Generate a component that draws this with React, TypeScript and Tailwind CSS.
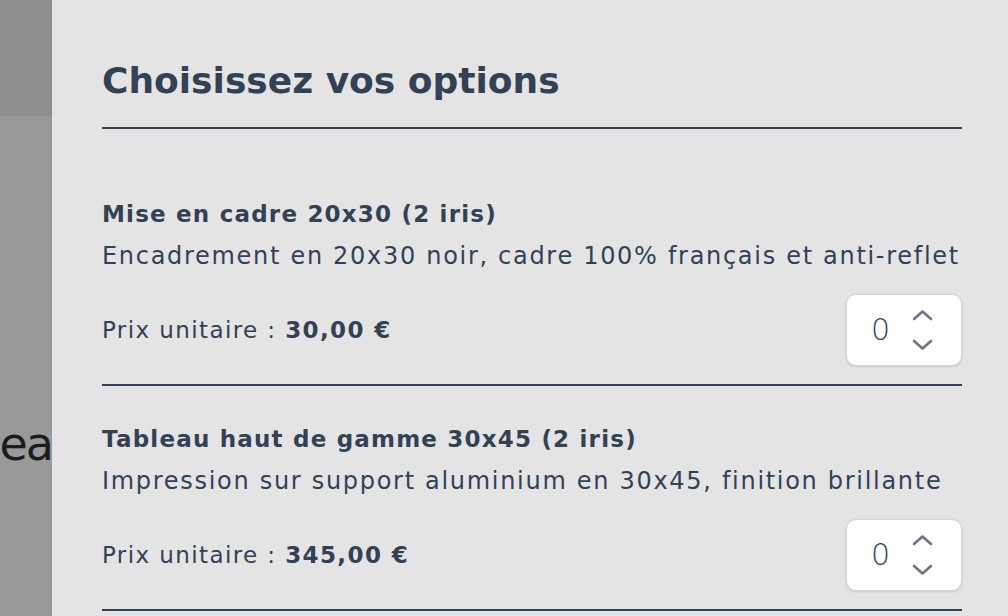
import React from "react";

type Option = {
  title: string;
  description: string;
  price: string;
};

const options: Option[] = [
  {
    title: "Mise en cadre 20x30 (2 iris)",
    description: "Encadrement en 20x30 noir, cadre 100% français et anti-reflet",
    price: "30,00 €",
  },
  {
    title: "Tableau haut de gamme 30x45 (2 iris)",
    description: "Impression sur support aluminium en 30x45, finition brillante",
    price: "345,00 €",
  },
];

function Stepper() {
  return (
    <div className="flex h-[72px] w-[116px] items-center rounded-[10px] border border-[#cfd6e0] bg-white pl-[24px] shadow-sm">
      <span className="w-[41px] text-[30px] font-light leading-none text-[#334155]">0</span>
      <div className="flex flex-col items-center gap-[18px] text-[#6b7585]">
        <svg width="21" height="12" viewBox="0 0 21 12" fill="none">
          <path d="M2 10 L10.5 2.5 L19 10" stroke="currentColor" strokeWidth="2.6" strokeLinecap="round" strokeLinejoin="round" />
        </svg>
        <svg width="21" height="12" viewBox="0 0 21 12" fill="none">
          <path d="M2 2 L10.5 9.5 L19 2" stroke="currentColor" strokeWidth="2.6" strokeLinecap="round" strokeLinejoin="round" />
        </svg>
      </div>
    </div>
  );
}

export default function App() {
  return (
    <div
      className="flex h-[616px] w-full overflow-hidden text-[#334155]"
      style={{ fontFamily: "'DejaVu Sans', 'Noto Sans', sans-serif" }}
    >
      {/* dimmed page behind the drawer */}
      <aside className="flex w-[52px] shrink-0 flex-col">
        <div className="h-[116px] bg-[#8e8e8e] shadow-[0_2px_3px_rgba(0,0,0,0.08)]"></div>
        <div className="flex flex-1 justify-end overflow-hidden bg-[#999999] pt-[305px]">
          <span className="whitespace-nowrap text-[46px] leading-none tracking-[-2px] text-[#1c1c1c]">ea</span>
        </div>
      </aside>

      {/* drawer */}
      <main className="flex-1 bg-[#e4e4e4] pl-[50px] pr-[46px] pt-[57px]">
        <h2 className="border-b-2 border-[#334155] pb-[22px] text-[36px] font-bold leading-[48px]">
          Choisissez vos options
        </h2>

        <div className="pt-[38px]">
          {options.map((opt, i) => (
            <div key={i} className={`border-b-2 border-[#334155] pb-[18px] ${i === 0 ? "pt-[32px]" : "pt-[38px]"}`}>
              <h3 className="text-[23px] font-bold leading-[30px] tracking-[1.2px]">{opt.title}</h3>
              <p className="mt-[9px] whitespace-nowrap text-[24px] leading-[36px] tracking-[1.7px]">{opt.description}</p>
              <div className="mt-[20px] flex items-center justify-between">
                <p className="text-[23px] leading-[36px] tracking-[1.4px]">
                  Prix unitaire : <span className="font-bold">{opt.price}</span>
                </p>
                <Stepper />
              </div>
            </div>
          ))}
        </div>
      </main>
    </div>
  );
}
